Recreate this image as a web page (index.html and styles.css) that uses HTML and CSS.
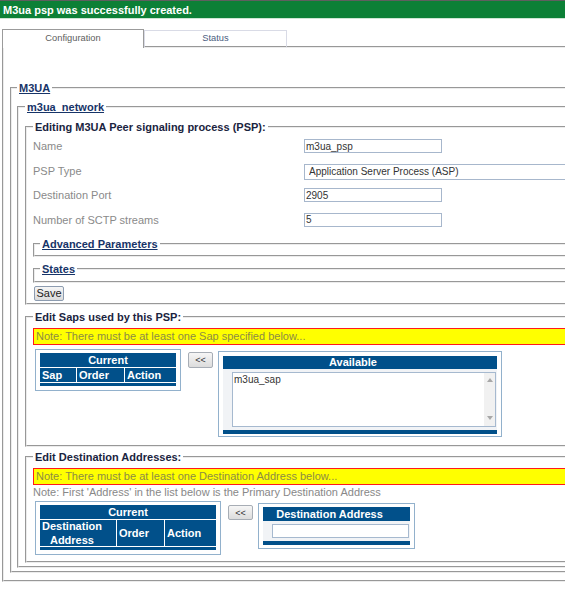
FILE: index.html
```html
<!DOCTYPE html>
<html>
<head>
<meta charset="utf-8">
<title>M3UA PSP</title>
<link rel="stylesheet" href="styles.css">
</head>
<body>
<div class="banner">M3ua psp was successfully created.</div>
<div class="tabs">
  <div class="tab tab-active">Configuration</div>
  <div class="tab tab-plain">Status</div>
  <div class="tab-fill"></div>
</div>
<div class="panel">
  <fieldset class="fs fs-m3ua">
    <legend><a href="#">M3UA</a></legend>
    <fieldset class="fs fs-net">
      <legend><a href="#">m3ua_network</a></legend>

      <fieldset class="fs fs-edit">
        <legend>Editing M3UA Peer signaling process (PSP):</legend>
        <div class="form-grid">
          <label class="lbl">Name</label>
          <input class="txt" type="text" value="m3ua_psp">
          <label class="lbl">PSP Type</label>
          <select class="sel"><option>Application Server Process (ASP)</option></select>
          <label class="lbl">Destination Port</label>
          <input class="txt" type="text" value="2905">
          <label class="lbl">Number of SCTP streams</label>
          <input class="txt" type="text" value="5">
        </div>
        <fieldset class="fs fs-sub fs-adv"><legend><a href="#">Advanced Parameters</a></legend></fieldset>
        <fieldset class="fs fs-sub fs-states"><legend><a href="#">States</a></legend></fieldset>
        <button class="btn btn-save" type="button">Save</button>
      </fieldset>

      <fieldset class="fs fs-saps">
        <legend>Edit Saps used by this PSP:</legend>
        <div class="note">Note: There must be at least one Sap specified below...</div>
        <div class="pick-row pick-row-saps">
          <div class="box box-current">
            <div class="bt bt-sap">
              <div class="bt-hd">Current</div>
              <div class="bt-cell">Sap</div>
              <div class="bt-cell">Order</div>
              <div class="bt-cell">Action</div>
              <div class="bt-stripe"></div>
            </div>
          </div>
          <button class="btn btn-move btn-move-saps" type="button">&lt;&lt;</button>
          <div class="box box-avail">
            <div class="av-hd">Available</div>
            <div class="av-body">
              <div class="listbox">
                <div class="list-items"><div class="list-item">m3ua_sap</div></div>
                <div class="list-scroll">
                  <svg width="6" height="4" viewBox="0 0 6 4"><path d="M0 4 L3 0 L6 4 Z" fill="#a8a8a8"/></svg>
                  <svg width="6" height="4" viewBox="0 0 6 4"><path d="M0 0 L6 0 L3 4 Z" fill="#a8a8a8"/></svg>
                </div>
              </div>
            </div>
            <div class="av-stripe"></div>
          </div>
        </div>
      </fieldset>

      <fieldset class="fs fs-dest">
        <legend>Edit Destination Addresses:</legend>
        <div class="note">Note: There must be at least one Destination Address below...</div>
        <div class="note2">Note: First 'Address' in the list below is the Primary Destination Address</div>
        <div class="pick-row pick-row-dest">
          <div class="box box-current">
            <div class="bt bt-dest">
              <div class="bt-hd">Current</div>
              <div class="bt-cell bt-cell-tall"><span class="stack">Destination<br>Address</span></div>
              <div class="bt-cell bt-cell-tall">Order</div>
              <div class="bt-cell bt-cell-tall">Action</div>
              <div class="bt-stripe"></div>
            </div>
          </div>
          <button class="btn btn-move btn-move-dest" type="button">&lt;&lt;</button>
          <div class="box box-dest">
            <div class="av-hd av-hd-dest">Destination Address</div>
            <div class="av-body">
              <input class="dest-input" type="text" value="">
            </div>
            <div class="av-stripe"></div>
          </div>
        </div>
      </fieldset>

    </fieldset>
  </fieldset>
</div>
</body>
</html>
```

FILE: styles.css
```css
html {
  overflow: hidden;
}

body {
  margin: 0;
  width: 660px;
  background: #ffffff;
  color: #333333;
  font-family: "Liberation Sans", Arial, sans-serif;
  font-size: 11px;
}

/* ---------- banner ---------- */
.banner {
  height: 16px;
  padding: 1px 0 0 3px;
  line-height: 16px;
  background: #0c8036;
  border-top: 1px solid #5f5f5f;
  border-bottom: 1px solid #cde6d4;
  color: #ffffff;
  font-weight: bold;
  font-size: 11px;
}

/* ---------- tabs ---------- */
.tabs {
  display: flex;
  align-items: flex-end;
  margin: 10px 0 0 2px;
}

.tab {
  text-align: center;
  font-size: 9.3px;
  background: #ffffff;
}

.tab-active {
  width: 140px;
  height: 18px;
  line-height: 16px;
  border: 1px solid #9b9b9b;
  border-bottom: none;
  color: #5e5e5e;
}

.tab-plain {
  width: 141px;
  height: 15px;
  line-height: 15px;
  border: 1px solid #d9dbe6;
  border-bottom: 2px groove #ececec;
  color: #4b5d80;
}

.tab-fill {
  flex: 1;
  border-bottom: 2px groove #ececec;
}

/* ---------- panel & fieldsets ---------- */
.panel {
  margin-left: 2px;
  padding: 32px 0 7px 6px;
  border-left: 2px groove #ececec;
  border-bottom: 2px groove #ececec;
}

.fs {
  margin: 0;
  min-width: 0;
  padding: 0 0 3px 6px;
  border: 2px groove #ececec;
}

.fs > legend {
  padding: 0 2px;
  line-height: 16px;
  font-size: 11px;
  font-weight: bold;
  color: #1a2440;
}

.fs > legend a {
  color: #173468;
  text-decoration: underline;
}

.fs-m3ua {
  padding: 3px 0 3px 5px;
}

.fs-net {
  padding: 4px 0 3px 6px;
}

.fs-edit {
  padding: 0 0 2px 6px;
}

.fs-sub {
  margin-top: 4px;
  padding: 0 0 3px 5px;
}

.fs-states {
  padding-bottom: 4px;
}

.fs-saps {
  margin-top: 4px;
  padding: 0 0 8px 6px;
}

.fs-dest {
  margin-top: 2px;
  padding: 0 0 6px 6px;
}

/* ---------- form ---------- */
.form-grid {
  display: grid;
  grid-template-columns: 271px auto;
  grid-auto-rows: 24.5px;
  align-items: center;
  justify-items: start;
  margin-top: -1px;
}

.lbl {
  color: #8a8a8a;
  font-size: 11px;
}

.txt {
  box-sizing: border-box;
  width: 138px;
  height: 14px;
  margin: 0;
  padding: 0 1px;
  border: 1px solid #a7b7cc;
  background: #ffffff;
  color: #333333;
  font-family: "Liberation Sans", Arial, sans-serif;
  font-size: 10px;
}

.sel {
  box-sizing: border-box;
  width: 300px;
  height: 16px;
  margin: 2px 0 0 0;
  padding: 0 0 0 4px;
  border: 1px solid #a7b7cc;
  border-radius: 0;
  background: #ffffff;
  color: #333333;
  font-family: "Liberation Sans", Arial, sans-serif;
  font-size: 10px;
  -webkit-appearance: none;
  appearance: none;
}

.btn {
  box-sizing: border-box;
  margin: 0;
  padding: 0;
  border: 1px solid #8d9cb0;
  border-radius: 2px;
  background: linear-gradient(#f6f6f6, #dcdcdc);
  color: #222222;
  font-family: "Liberation Sans", Arial, sans-serif;
}

.btn-save {
  display: block;
  width: 30px;
  height: 15px;
  margin: 3px 0 0 1px;
  font-size: 11px;
  line-height: 13px;
}

/* ---------- notes ---------- */
.note {
  margin-top: 3px;
  height: 15px;
  padding-left: 2px;
  line-height: 15px;
  border: 1px solid #ff1a1a;
  background: #ffff00;
  color: #8c8c44;
  font-size: 11px;
  white-space: nowrap;
}

.note2 {
  line-height: 14px;
  color: #888888;
  font-size: 11px;
  white-space: nowrap;
}

/* ---------- picker rows ---------- */
.pick-row {
  display: flex;
  align-items: flex-start;
  margin-left: 2px;
}

.pick-row-saps {
  margin-top: 4px;
}

.pick-row-dest {
  margin-top: 2px;
}

.box {
  border: 1px solid #92b1cc;
  background: #ffffff;
}

.box-current {
  padding: 3px 4px 4px;
}

.bt {
  display: grid;
  gap: 1px;
  background: #ffffff;
}

.bt > div {
  background: #01508a;
  color: #ffffff;
  font-weight: bold;
  font-size: 11px;
  line-height: 14px;
}

.bt-sap {
  grid-template-columns: 36px 47px 51px;
}

.bt-dest {
  grid-template-columns: 76px 47px 51px;
}

.bt-hd {
  grid-column: 1 / -1;
  text-align: center;
}

.bt-cell {
  padding-left: 2px;
}

.bt-cell-tall {
  display: flex;
  align-items: center;
  height: 26px;
  line-height: 13px;
}

.bt-dest .bt-cell-tall:first-of-type {
  padding-left: 1px;
}

.stack {
  display: inline-block;
  text-align: center;
}

.bt-stripe {
  grid-column: 1 / -1;
  height: 3px;
}

.btn-move {
  width: 25px;
  margin-left: 7px;
  font-size: 9px;
  line-height: 12px;
  color: #333333;
  border-color: #a7adb5;
}

.btn-move-saps {
  height: 16px;
  margin-top: 3px;
}

.btn-move-dest {
  height: 15px;
  margin-top: 4px;
}

.box-avail {
  width: 274px;
  margin: 2px 0 0 5px;
  padding: 4px 4px 2px;
}

.box-dest {
  width: 147px;
  margin: 2px 0 0 5px;
  padding: 3px 4px 3px;
}

.av-hd {
  height: 13px;
  padding-right: 14px;
  line-height: 13px;
  background: #01508a;
  color: #ffffff;
  font-weight: bold;
  font-size: 11px;
  text-align: center;
}

.av-hd-dest {
  height: 14px;
  line-height: 14px;
}

.av-body {
  padding: 3px 1px 3px 9px;
  background: #f1f3f6;
}

.av-stripe {
  height: 4px;
  background: #01508a;
}

.listbox {
  display: flex;
  box-sizing: border-box;
  height: 55px;
  border: 1px solid #a6b9cf;
  background: #ffffff;
}

.list-items {
  flex: 1;
  padding: 0 1px;
}

.list-item {
  line-height: 13px;
  color: #333333;
  font-size: 10px;
}

.list-scroll {
  display: flex;
  flex-direction: column;
  justify-content: space-between;
  align-items: center;
  width: 11px;
  padding: 5px 0 6px;
  background: #f1f1f1;
}

.list-scroll svg {
  display: block;
}

.dest-input {
  display: block;
  box-sizing: border-box;
  width: 100%;
  height: 14px;
  margin: 0;
  padding: 0 1px;
  border: 1px solid #a6b9cf;
  background: #ffffff;
  font-family: "Liberation Sans", Arial, sans-serif;
  font-size: 10px;
}
```
